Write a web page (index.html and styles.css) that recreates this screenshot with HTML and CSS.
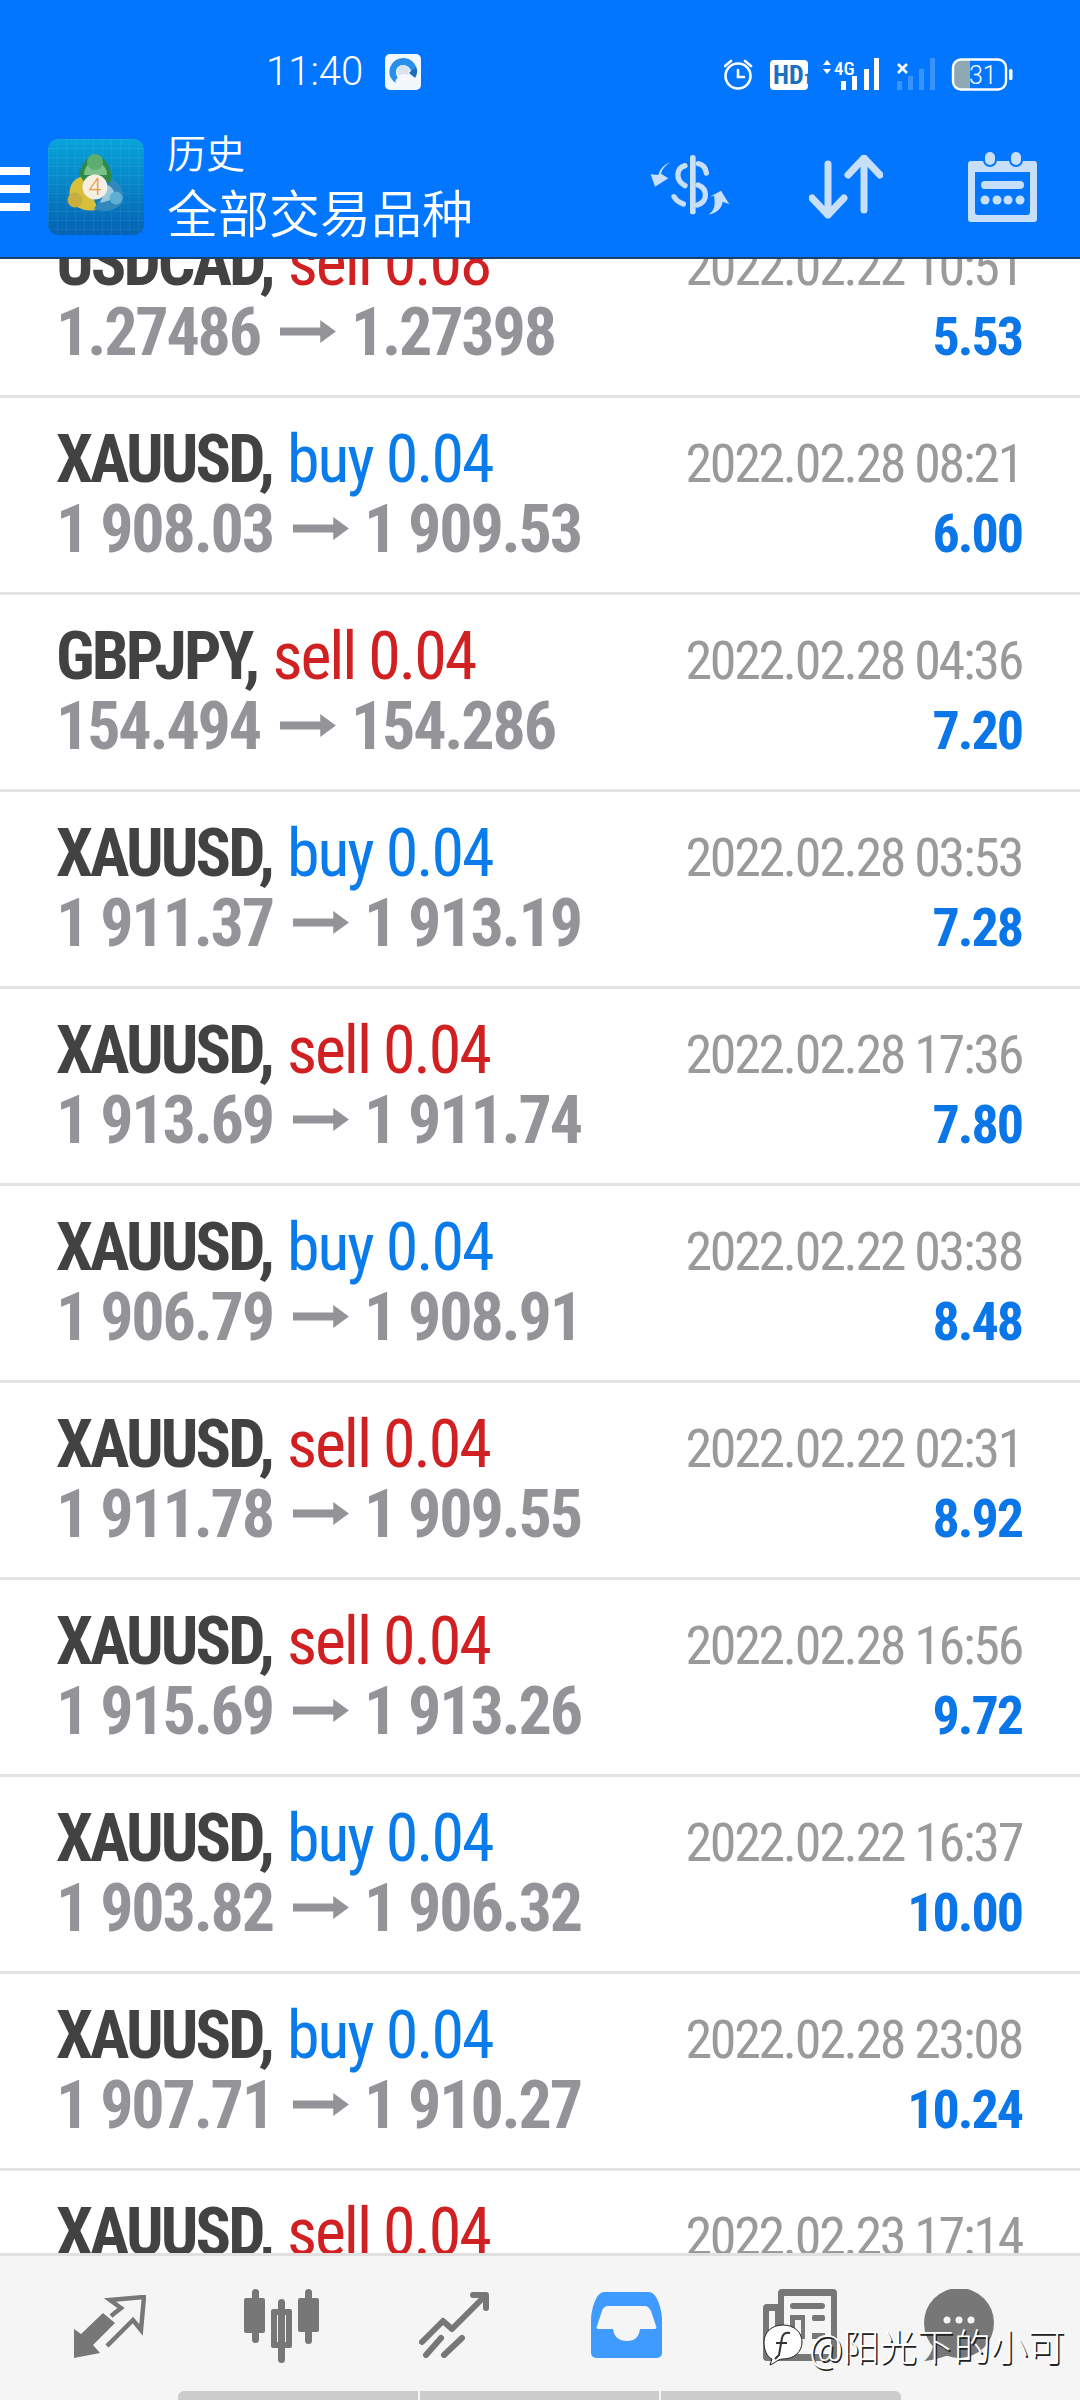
FILE: index.html
```html
<!DOCTYPE html>
<html lang="en">
<head>
<meta charset="UTF-8" />
<meta name="viewport" content="width=device-width, initial-scale=1" />
<title>历史</title>
<link rel="stylesheet" href="styles.css">
</head>
<body>

<div class="screen">
  <header class="top">
    <div class="status">
      <span class="clock">11:40</span>
      <svg class="note-icon" width="36" height="36" viewBox="0 0 36 36">
        <rect width="36" height="36" rx="5" fill="#f2f8fe"/>
        <path d="M18 4a14 14 0 0 0-13 18c2 5 6 8 11 8h4c-6-3-9-7-9-12 0-4 3-7 7-7s8 3 8 7h6C32 10 26 4 18 4z" fill="#2a8fe8"/>
        <path d="M31 13c2 4 1 8-1 11l-6-5z" fill="#1f6fc0"/>
        <circle cx="18" cy="17" r="6" fill="#d8e4f0"/>
        <path d="M14 31c-4 0-5-6-1-7 1-5 9-5 10-1 4-2 9 1 8 5 0 2-2 3-4 3z" fill="#f4f8fd"/>
      </svg>
      <svg class="status-icons" width="295" height="34" viewBox="0 0 295 34">
        <!-- alarm -->
        <g fill="none" stroke="#fff" stroke-width="2.600">
          <circle cx="14" cy="19" r="12.500"/>
          <path d="M14 13v7h6M1 9l6-5M27 9l-6-5" stroke-linecap="round"/>
        </g>
        <!-- HD badge -->
        <rect x="46" y="3" width="38" height="30" rx="4" fill="#fff"/>
        <text class="hd" x="49" y="27">HD<tspan class="hd-sub">1</tspan></text>
        <!-- 4G signal -->
        <path d="M99 8l4-5 4 5zM99 12l4 5 4-5z" fill="#fff"/>
        <text class="net" x="110" y="18">4G</text>
        <g fill="#fff">
          <rect x="117" y="24" width="5" height="9"/>
          <rect x="128" y="19" width="5" height="14"/>
          <rect x="140" y="12" width="5" height="21"/>
          <rect x="150" y="1" width="5" height="32"/>
        </g>
        <!-- second sim, no service -->
        <path d="M174 7l9 9m0-9l-9 9" stroke="#fff" stroke-width="2.600"/>
        <g fill="#fff" opacity=".22">
          <rect x="173" y="24" width="5" height="9"/>
          <rect x="184" y="19" width="5" height="14"/>
          <rect x="195" y="12" width="5" height="21"/>
          <rect x="206" y="1" width="5" height="32"/>
        </g>
        <!-- battery -->
        <path d="M235 3h11v30h-11a6 6 0 0 1-6-6V9a6 6 0 0 1 6-6z" fill="#8fa9b4"/>
        <rect x="229" y="2.500" width="53" height="30" rx="8" fill="none" stroke="#fff" stroke-width="2.400"/>
        <rect x="285" y="12" width="3.500" height="11" rx="1.500" fill="#fff"/>
        <text class="batt" x="245" y="27">31</text>
      </svg>
    </div>
    <div class="bar">
      <div class="burger"><i></i><i></i><i></i></div>
      <svg class="logo" width="96" height="96" viewBox="0 0 96 96">
        <defs>
          <linearGradient id="tile" x1="0" y1="0" x2="0" y2="1">
            <stop offset="0" stop-color="#08a4da"/>
            <stop offset="1" stop-color="#0562b2"/>
          </linearGradient>
          <pattern id="tile-grid" width="9" height="9" patternUnits="userSpaceOnUse">
            <path d="M9 0H0V9" fill="none" stroke="#fff" stroke-opacity=".1"/>
          </pattern>
        </defs>
        <rect width="96" height="96" rx="10" fill="url(#tile)"/>
        <rect width="96" height="96" rx="10" fill="url(#tile-grid)"/>
        <path d="M31 44C30 28 38 18 47 15c10 3 19 15 16 29L47 40z" fill="#2f8a48"/>
        <path d="M36 36c0-8 5-13 11-14 7 1 12 7 12 14z" fill="#7cc08a"/>
        <circle cx="47" cy="23" r="8" fill="#5cae70"/>
        <path d="M33 38C24 40 20 50 22 58c4 12 18 16 28 12l-6-14z" fill="#d8bf3c"/>
        <circle cx="27" cy="61" r="7.500" fill="#c8ae3e"/>
        <path d="M64 40c8 4 14 14 10 24-6 8-18 10-28 6l8-14z" fill="#3288bd"/>
        <path d="M60 46c5 3 8 8 6 14l-14 4z" fill="#9cc8de"/>
        <circle cx="68" cy="59" r="6.500" fill="#5cb0d4"/>
        <circle cx="47" cy="48" r="12.500" fill="#f6f0e4"/>
        <text class="logo-four" x="47" y="56">4</text>
      </svg>
      <div class="titles">
        <div class="title-sm">历史</div>
        <div class="title-lg">全部交易品种</div>
      </div>
      <div class="actions">
        <svg class="act-dollar" width="100" height="90" viewBox="0 0 300 270" fill="#c8dff9">
          <rect x="150" y="30" width="17" height="178" rx="8"/>
          <g fill="none" stroke="#c8dff9" stroke-width="16" stroke-linecap="round">
            <path d="M175 56c14 3 22 14 24 28"/>
            <path d="M135 62c-27 8-30 43 0 60"/>
            <path d="M174 120c30 12 30 50-2 60"/>
            <path d="M102 155c5 10 14 17 28 22"/>
          </g>
          <path d="M92 52c-14 8-26 20-29 34l22 14-40 25-13-37 23 2c5-20 20-33 37-38z"/>
          <path d="M205 208c18-10 22-28 17-56l-12 3 33-18 25 41-20-8c-3 20-18 36-43 38z"/>
        </svg>
        <svg class="act-sort" width="74" height="66" viewBox="0 0 74 66" fill="none" stroke="#c8dff9" stroke-width="7" stroke-linecap="round" stroke-linejoin="round">
          <path d="M19 9v51M3 43l16 17 16-17"/>
          <path d="M55 3v52M39 20L55 3l16 17"/>
        </svg>
        <svg class="act-cal" width="69" height="71" viewBox="0 0 69 71" fill="#c8dff9">
          <path d="M3 10h63a3 3 0 0 1 3 3v55a3 3 0 0 1-3 3H3a3 3 0 0 1-3-3V13a3 3 0 0 1 3-3zM7 21v40a3 3 0 0 0 3 3h49a3 3 0 0 0 3-3V21z" fill-rule="evenodd"/>
          <rect x="16" y="0" width="12" height="15" rx="6" stroke="#0276fe" stroke-width="2"/>
          <rect x="42" y="0" width="12" height="15" rx="6" stroke="#0276fe" stroke-width="2"/>
          <rect x="13" y="30" width="43" height="8" rx="4"/>
          <circle cx="17" cy="49" r="4.500"/><circle cx="29" cy="49" r="4.500"/><circle cx="40" cy="49" r="4.500"/><circle cx="52" cy="49" r="4.500"/>
        </svg>
      </div>
    </div>
  </header>

  <main class="list-wrap">
    <div class="list">
      <div class="row">
        <div class="head"><b>USDCAD,</b> <span class="sell">sell 0.08</span></div>
        <div class="date">2022.02.22 10:51</div>
        <div class="price">1.27486<i class="arrow"></i>1.27398</div>
        <div class="profit">5.53</div>
      </div>
      <div class="row">
        <div class="head"><b>XAUUSD,</b> <span class="buy">buy 0.04</span></div>
        <div class="date">2022.02.28 08:21</div>
        <div class="price">1 908.03<i class="arrow"></i>1 909.53</div>
        <div class="profit">6.00</div>
      </div>
      <div class="row">
        <div class="head"><b>GBPJPY,</b> <span class="sell">sell 0.04</span></div>
        <div class="date">2022.02.28 04:36</div>
        <div class="price">154.494<i class="arrow"></i>154.286</div>
        <div class="profit">7.20</div>
      </div>
      <div class="row">
        <div class="head"><b>XAUUSD,</b> <span class="buy">buy 0.04</span></div>
        <div class="date">2022.02.28 03:53</div>
        <div class="price">1 911.37<i class="arrow"></i>1 913.19</div>
        <div class="profit">7.28</div>
      </div>
      <div class="row">
        <div class="head"><b>XAUUSD,</b> <span class="sell">sell 0.04</span></div>
        <div class="date">2022.02.28 17:36</div>
        <div class="price">1 913.69<i class="arrow"></i>1 911.74</div>
        <div class="profit">7.80</div>
      </div>
      <div class="row">
        <div class="head"><b>XAUUSD,</b> <span class="buy">buy 0.04</span></div>
        <div class="date">2022.02.22 03:38</div>
        <div class="price">1 906.79<i class="arrow"></i>1 908.91</div>
        <div class="profit">8.48</div>
      </div>
      <div class="row">
        <div class="head"><b>XAUUSD,</b> <span class="sell">sell 0.04</span></div>
        <div class="date">2022.02.22 02:31</div>
        <div class="price">1 911.78<i class="arrow"></i>1 909.55</div>
        <div class="profit">8.92</div>
      </div>
      <div class="row">
        <div class="head"><b>XAUUSD,</b> <span class="sell">sell 0.04</span></div>
        <div class="date">2022.02.28 16:56</div>
        <div class="price">1 915.69<i class="arrow"></i>1 913.26</div>
        <div class="profit">9.72</div>
      </div>
      <div class="row">
        <div class="head"><b>XAUUSD,</b> <span class="buy">buy 0.04</span></div>
        <div class="date">2022.02.22 16:37</div>
        <div class="price">1 903.82<i class="arrow"></i>1 906.32</div>
        <div class="profit">10.00</div>
      </div>
      <div class="row">
        <div class="head"><b>XAUUSD,</b> <span class="buy">buy 0.04</span></div>
        <div class="date">2022.02.28 23:08</div>
        <div class="price">1 907.71<i class="arrow"></i>1 910.27</div>
        <div class="profit">10.24</div>
      </div>
      <div class="row">
        <div class="head"><b>XAUUSD,</b> <span class="sell">sell 0.04</span></div>
        <div class="date">2022.02.23 17:14</div>
      </div>
    </div>
  </main>

  <nav class="tabs">
    <div class="tab-icons">
      <svg class="tab-quotes" width="72" height="64" viewBox="0 0 72 64">
        <path d="M0 63V34l7 5 22-21 12 10-22 22 7 8z" fill="#777"/>
        <path d="M37 21l10-8-11-8 34-3-3 33-8-10-26 26" fill="none" stroke="#777" stroke-width="4.500"/>
      </svg>
      <svg class="tab-chart" width="75" height="74" viewBox="0 0 75 74" fill="#777">
        <rect x="8" y="0" width="7" height="54" rx="3.500"/>
        <rect x="0" y="9" width="21" height="35" rx="2"/>
        <rect x="34" y="10" width="7" height="64" rx="3.500"/>
        <path d="M29 20h17a2 2 0 0 1 2 2v35a2 2 0 0 1-2 2H29a2 2 0 0 1-2-2V22a2 2 0 0 1 2-2zm4 6v27h9V26z" fill-rule="evenodd"/>
        <rect x="61" y="0" width="7" height="55" rx="3.500"/>
        <rect x="54" y="9" width="21" height="34" rx="2"/>
      </svg>
      <svg class="tab-trade" width="70" height="66" viewBox="0 0 70 66" fill="none" stroke="#777" stroke-width="6" stroke-linecap="round" stroke-linejoin="round">
        <path d="M3 50l21-21 9 8L66 4"/>
        <path d="M54 3h13v13"/>
        <path d="M7 63l15-17M25 63l18-17"/>
      </svg>
      <svg class="tab-inbox" width="71" height="66" viewBox="0 0 71 66">
        <path d="M14 0h43c4 0 6 2 8 5 4 7 6 16 6 24v32a5 5 0 0 1-5 5H5a5 5 0 0 1-5-5V29c0-8 2-17 6-24 2-3 4-5 8-5z" fill="#3f9bff"/>
        <path d="M18 14h35c3 0 5 1 7 5l5 15c1 1 0 3-1 3H49c-1 8-5 12-13 12s-13-4-14-12H7c-1 0-2-2-1-3l5-15c1-3 3-5 7-5z" fill="#f5f5f5"/>
      </svg>
      <svg class="tab-news" width="74" height="72" viewBox="0 0 74 72" fill="#777">
        <path d="M19 0h51a4 4 0 0 1 4 4v64a4 4 0 0 1-4 4H4a4 4 0 0 1-4-4V19a4 4 0 0 1 4-4h11V4a4 4 0 0 1 4-4zm2 7v58h47V7zM6 22v42h6V22z" fill-rule="evenodd"/>
        <rect x="27" y="14" width="35" height="6" rx="3"/>
        <rect x="49" y="26" width="13" height="6" rx="2"/>
        <path d="M27 26h15v24H27zm5 5v14h6V31z" fill-rule="evenodd"/>
        <rect x="49" y="44" width="13" height="6"/>
      </svg>
      <svg class="tab-chat" width="72" height="72" viewBox="0 0 72 72">
        <circle cx="36" cy="34" r="35" fill="#777"/>
        <path d="M10 54C10 62 6 68 1 72c12-1 22-5 30-8z" fill="#777"/>
        <circle cx="24" cy="31" r="3.500" fill="#f5f5f5"/>
        <circle cx="36" cy="31" r="3.500" fill="#f5f5f5"/>
        <circle cx="48" cy="31" r="3.500" fill="#f5f5f5"/>
      </svg>
    </div>
    <div class="pager"><i></i><i></i><i></i></div>
  </nav>

  <!-- author tag stamped over the tab bar -->
  <div class="stamp">
    <svg width="40" height="42" viewBox="0 0 40 42">
      <path d="M20 1c11 0 19 7 19 17s-8 17-19 17c-4 0-6 2-9 4l-4 2 2-6C4 33 1 26 1 18 1 8 9 1 20 1z" fill="#fff" stroke="#222" stroke-width="1"/>
      <path d="M27 9c-5-1-7 1-8 5l-3 17-4 4M13 19h11" fill="none" stroke="#333" stroke-width="2"/>
    </svg>
    <span>@阳光下的小可</span>
  </div>
</div>

</body>
</html>
```

FILE: styles.css
```css
* {
  box-sizing: border-box;
}
body {
  margin: 0;
  background: #fff;
  font-family: Roboto, "Noto Sans CJK SC", sans-serif;
}
.screen {
  position: relative;
  width: 1080px;
  height: 2400px;
  display: flex;
  flex-direction: column;
  overflow: hidden;
}

/* blue top area */
.top {
  height: 259px;
  flex: none;
  background: #0276fe;
  border-bottom: 2px solid #1c3f6e;
  color: #fff;
  position: relative;
  z-index: 1;
}
.status {
  height: 132px;
  display: flex;
  align-items: flex-start;
  padding: 54px 0 0 266px;
}
.clock {
  width: 119px;
  font-size: 40px;
  font-stretch: 88%;
  font-weight: 300;
  line-height: 36px;
}
.note-icon {
  flex: none;
}
.status-icons {
  flex: none;
  margin: 3px 0 0 303px;
}
.status-icons text {
  font-family: Roboto, sans-serif;
  fill: #fff;
}
.status-icons .hd {
  font-size: 26px;
  font-weight: 700;
  font-stretch: 75%;
  fill: #1a6fc4;
}
.status-icons .hd-sub {
  font-size: 15px;
}
.status-icons .net {
  font-size: 19px;
  font-weight: 500;
  font-stretch: 75%;
}
.status-icons .batt {
  font-size: 25px;
  font-weight: 300;
}
.bar {
  display: flex;
  align-items: flex-start;
}
.burger {
  width: 30px;
  margin-top: 35px;
  display: flex;
  flex-direction: column;
  gap: 10px;
}
.burger i {
  height: 8px;
  background: #fff;
}
.logo {
  flex: none;
  margin: 7px 0 0 18px;
}
.logo-four {
  font-size: 24px;
  font-weight: 300;
  fill: #e9a03c;
  text-anchor: middle;
}
.titles {
  flex: none;
  margin-left: 23px;
  width: 473px;
}
.title-sm {
  font-size: 39px;
  font-weight: 350;
  line-height: 42px;
  margin-top: 2px;
}
.title-lg {
  font-size: 51px;
  font-weight: 350;
  line-height: 58px;
  margin-top: 11px;
}
.actions {
  display: flex;
  align-items: flex-start;
}
.act-dollar {
  flex: none;
  margin-top: 13px;
}
.act-sort {
  flex: none;
  margin: 23px 0 0 69px;
}
.act-cal {
  flex: none;
  margin: 19px 0 0 85px;
}

/* history rows */
.list-wrap {
  flex: 1;
  min-height: 0;
  overflow: hidden;
}
.list {
  margin-top: -58px;
}
.row {
  height: 197px;
  border-bottom: 3px solid #e4e4e4;
  padding: 23px 58px 0 56px;
  display: grid;
  grid-template-columns: 1fr auto;
  grid-auto-rows: 70px;
  align-items: baseline;
  white-space: nowrap;
  font-stretch: 75%;
}
.head {
  font-size: 66px;
  letter-spacing: -2.100px;
}
.head b {
  color: #424242;
  letter-spacing: -2.900px;
}
.head span {
  margin-left: 2px;
}
.sell {
  color: #d02022;
}
.buy {
  color: #0a7bea;
}
.date {
  font-size: 54px;
  letter-spacing: -2.300px;
  color: #9a9a9a;
  text-align: right;
}
.price {
  font-size: 66px;
  font-weight: 700;
  letter-spacing: -2.200px;
  color: #949498;
}
.profit {
  font-size: 54px;
  font-weight: 700;
  letter-spacing: -2px;
  color: #0a76e8;
  text-align: right;
}
.arrow {
  display: inline-block;
  width: 56px;
  height: 23px;
  margin: 0 15px 0 20px;
  vertical-align: 12px;
  background: #949498;
  clip-path: polygon(0 33%, 72% 33%, 72% 0, 100% 50%, 72% 100%, 72% 67%, 0 67%);
}

/* bottom tabs */
.tabs {
  height: 147px;
  flex: none;
  background: #f5f5f5;
  border-top: 3px solid #e0e0e0;
  position: relative;
  z-index: 1;
}
.tab-icons {
  height: 135px;
  display: flex;
  align-items: flex-start;
  padding-left: 74px;
}
.tab-icons svg {
  flex: none;
}
.tab-quotes {
  margin: 39px 98px 0 0;
}
.tab-chart {
  margin: 33px 100px 0 0;
}
.tab-trade {
  margin: 36px 102px 0 0;
}
.tab-inbox {
  margin: 36px 101px 0 0;
}
.tab-news {
  margin: 33px 86px 0 0;
}
.tab-chat {
  margin-top: 33px;
}
.pager {
  display: flex;
  gap: 2px;
  width: 723px;
  height: 9px;
  margin-left: 178px;
}
.pager i {
  flex: 1;
  background: #ccc;
}
.pager i:first-child {
  border-radius: 6px 0 0 0;
}
.pager i:last-child {
  border-radius: 0 6px 0 0;
}

.stamp {
  position: absolute;
  left: 763px;
  top: 2318px;
  z-index: 2;
  display: flex;
  align-items: center;
  gap: 6px;
  color: #fff;
  font-size: 37px;
  font-weight: 300;
  text-shadow: 1.500px 1.500px 0 #222;
}
```
